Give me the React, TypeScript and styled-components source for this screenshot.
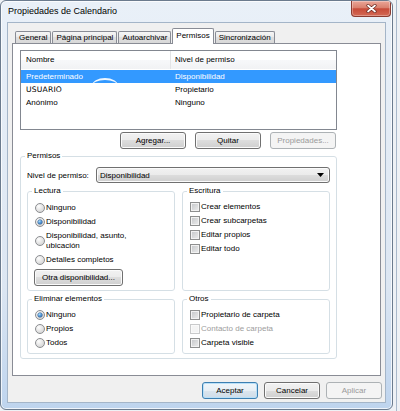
import React from "react";
import styled, { createGlobalStyle, css } from "styled-components";

const GlobalStyle = createGlobalStyle`
  html, body { margin: 0; padding: 0; }
  body {
    width: 400px;
    height: 411px;
    overflow: hidden;
    background: linear-gradient(to right, transparent 396px, #a9b8ca 396px, #a9b8ca 397px, transparent 397px), #eef1f5;
    font-family: "Liberation Sans", Arial, sans-serif;
    font-size: 8px;
    color: #000;
  }
`;

const Window = styled.div`
  box-sizing: border-box;
  width: 393px;
  height: 410px;
  border: 1px solid #6b7b8e;
  border-radius: 6px;
  background: linear-gradient(#e9f0f8, #dce6f2 70%, #bed4ee);
  box-shadow: inset 0 0 0 1px rgba(255, 255, 255, 0.75);
  display: flex;
  flex-direction: column;
  overflow: hidden;
`;

const TitleBar = styled.div`
  height: 21px;
  display: flex;
  justify-content: space-between;
  align-items: flex-start;
  padding-left: 7px;
`;

const Title = styled.span`
  font-size: 9px;
  line-height: 21px;
`;

const CloseButton = styled.div`
  box-sizing: border-box;
  width: 40px;
  height: 16px;
  margin-right: 1px;
  border: 1px solid #8b3b30;
  border-top: none;
  border-radius: 0 0 4px 4px;
  background: linear-gradient(#eaa698, #d9806e 45%, #c74b39 52%, #d36a55);
  box-shadow: inset 0 0 0 1px rgba(255, 255, 255, 0.3);
  display: flex;
  align-items: center;
  justify-content: center;
`;

const Client = styled.div`
  box-sizing: border-box;
  margin: 0 6px;
  height: 381px;
  border: 1px solid #a4b5c8;
  background: #f0f0f0;
  padding: 5px 3px 3px 4px;
  display: flex;
  flex-direction: column;
`;

const TabStrip = styled.div`
  display: flex;
  align-items: flex-end;
  gap: 1px;
  height: 15px;
  padding-left: 3px;
  position: relative;
  z-index: 1;
`;

const Tab = styled.div<{ $active?: boolean }>`
  box-sizing: border-box;
  padding: 0 3px;
  border: 1px solid #898c95;
  border-bottom: none;
  border-radius: 2px 2px 0 0;
  white-space: nowrap;
  ${(p) =>
    p.$active
      ? css`
          height: 16px;
          margin-bottom: -1px;
          line-height: 14px;
          background: #fff;
        `
      : css`
          height: 12px;
          line-height: 11px;
          background: linear-gradient(#f6f6f6, #e9e9e9 50%, #dfdfdf 50%, #d8d8d8);
        `}
`;

const Panel = styled.div`
  box-sizing: border-box;
  height: 333px;
  margin-right: 1px;
  border: 1px solid #898c95;
  background: #fff;
  padding: 6px 0 0 7px;
`;

const ListView = styled.div`
  box-sizing: border-box;
  width: 317px;
  height: 80px;
  border: 1px solid #828790;
  background: #fff;
`;

const ListHeader = styled.div`
  display: flex;
  height: 18px;
  background: linear-gradient(#fff, #fff 50%, #f7f8fa 50%, #f1f2f4);
`;

const HeaderCell = styled.div<{ $first?: boolean }>`
  box-sizing: border-box;
  line-height: 18px;
  ${(p) =>
    p.$first
      ? css`
          width: 150px;
          padding-left: 5px;
          border-right: 1px solid #e3e4e6;
        `
      : css`
          flex: 1;
          padding-left: 4px;
        `}
`;

const Rows = styled.div`
  padding-top: 1px;
`;

const Row = styled.div<{ $selected?: boolean }>`
  position: relative;
  display: flex;
  height: 13px;
  line-height: 13px;
  ${(p) =>
    p.$selected &&
    css`
      background: #3399ff;
      color: #fff;
    `}
`;

const Cell = styled.div<{ $first?: boolean; $mono?: boolean }>`
  box-sizing: border-box;
  ${(p) =>
    p.$first
      ? css`
          width: 150px;
          padding-left: 5px;
        `
      : css`
          flex: 1;
          padding-left: 4px;
        `}
  ${(p) =>
    p.$mono &&
    css`
      font-family: "DejaVu Sans", sans-serif;
      font-size: 7.6px;
      letter-spacing: 0.2px;
    `}
`;

const Smudge = styled.span`
  position: absolute;
  left: 71px;
  top: 8px;
  box-sizing: border-box;
  width: 26px;
  height: 8px;
  border-top: 2.5px solid rgba(255, 255, 255, 0.92);
  border-radius: 50% 50% 0 0 / 100% 100% 0 0;
`;

const ButtonRow = styled.div<{ $gap: number }>`
  display: flex;
  justify-content: flex-end;
  gap: ${(p) => p.$gap}px;
`;

const ListButtons = styled(ButtonRow)`
  box-sizing: border-box;
  width: 317px;
  padding-right: 1px;
  margin-top: 2px;
`;

const Button = styled.button<{ $w: number; $variant?: "default" | "disabled" }>`
  box-sizing: border-box;
  width: ${(p) => p.$w}px;
  height: 17px;
  padding: 0;
  font-family: "Liberation Sans", Arial, sans-serif;
  font-size: 8px;
  color: #000;
  border: 1px solid #707070;
  border-radius: 3px;
  background: linear-gradient(#f2f2f2, #ebebeb 50%, #dddddd 50%, #cfcfcf);
  box-shadow: inset 0 0 0 1px #fbfbfb;
  flex-shrink: 0;
  ${(p) =>
    p.$variant === "default" &&
    css`
      border-color: #3c7fb1;
      background: linear-gradient(#f0f6fa, #e8eff5 50%, #dbe5ee 50%, #cfdce8);
      box-shadow: inset 0 0 0 1px #b9e0f8;
    `}
  ${(p) =>
    p.$variant === "disabled" &&
    css`
      border-color: #adb2b5;
      background: #f4f4f4;
      color: #9a9a9a;
      box-shadow: none;
    `}
`;

const Group = styled.fieldset<{ $mt?: number }>`
  box-sizing: border-box;
  margin: ${(p) => p.$mt ?? 0}px 0 0 0;
  padding: 0;
  min-width: 0;
  border: 1px solid #d5dfe5;
  border-radius: 3px;
`;

const PermGroup = styled(Group)`
  width: 317px;
`;

const Legend = styled.legend`
  margin-left: 4px;
  padding: 0 2px;
  font-size: 8px;
  line-height: 10px;
`;

const GroupBody = styled.div<{ $pt: number; $pb: number }>`
  display: flex;
  flex-direction: column;
  gap: 4px;
  padding: ${(p) => p.$pt}px 6px ${(p) => p.$pb}px 7px;
`;

const PermBody = styled.div`
  padding: 6px 6px 4px 6px;
`;

const LevelRow = styled.div`
  display: flex;
  align-items: center;
`;

const LevelLabel = styled.span`
  width: 69px;
  flex-shrink: 0;
`;

const Combo = styled.div`
  box-sizing: border-box;
  flex: 1;
  height: 16px;
  padding: 0 5px 0 3px;
  border: 1px solid #707070;
  border-radius: 3px;
  background: linear-gradient(#f2f2f2, #ebebeb 50%, #dddddd 50%, #cfcfcf);
  box-shadow: inset 0 0 0 1px #fbfbfb;
  display: flex;
  align-items: center;
  justify-content: space-between;
`;

const SubGrid = styled.div`
  display: grid;
  grid-template-columns: 148px 148px;
  column-gap: 7px;
  row-gap: 3px;
  margin-top: 3px;
`;

const Option = styled.div<{ $disabled?: boolean }>`
  display: flex;
  align-items: center;
  line-height: 10px;
  color: ${(p) => (p.$disabled ? "#9d9d9d" : "#000")};
`;

const OptionText = styled.span<{ $max?: number }>`
  ${(p) => p.$max && css`max-width: ${p.$max}px;`}
`;

const Radio = styled.span`
  box-sizing: border-box;
  width: 10px;
  height: 10px;
  flex-shrink: 0;
  margin-right: 1px;
  border-radius: 50%;
  border: 1px solid #8b8d90;
  background: radial-gradient(circle at 35% 30%, #fdfdfd, #dadada 70%, #cdcdcd);
  display: flex;
  align-items: center;
  justify-content: center;
`;

const RadioDot = styled.span`
  width: 4px;
  height: 4px;
  border-radius: 50%;
  background: radial-gradient(circle at 40% 35%, #a6dbfb, #2f79c4 60%, #1b4a86);
  box-shadow: 0 0 0 0.5px #1d4f86;
`;

const Check = styled.span<{ $disabled?: boolean }>`
  box-sizing: border-box;
  width: 10px;
  height: 10px;
  flex-shrink: 0;
  margin-right: 1px;
  border: 1px solid ${(p) => (p.$disabled ? "#c9cacb" : "#8e8f8f")};
  background: ${(p) =>
    p.$disabled ? "#f4f4f4" : "linear-gradient(135deg, #c3c5c8, #eeeeee)"};
  box-shadow: inset 0 0 0 1px ${(p) => (p.$disabled ? "#fafafa" : "#f2f2f2")};
`;

const OtherButton = styled(Button)`
  align-self: flex-start;
  margin-left: -1px;
`;

const BottomButtons = styled(ButtonRow)`
  margin-top: 6px;
`;

const RadioOpt = ({ label, checked, max }: { label: string; checked?: boolean; max?: number }) => (
  <Option>
    <Radio>{checked && <RadioDot />}</Radio>
    <OptionText $max={max}>{label}</OptionText>
  </Option>
);

const CheckOpt = ({ label, disabled }: { label: string; disabled?: boolean }) => (
  <Option $disabled={disabled}>
    <Check $disabled={disabled} />
    <OptionText>{label}</OptionText>
  </Option>
);

export default function App() {
  return (
    <>
      <GlobalStyle />
      <Window>
        <TitleBar>
          <Title>Propiedades de Calendario</Title>
          <CloseButton>
            <svg width="11" height="9" viewBox="0 0 11 9">
              <path d="M2 1.5 L9 7.5 M9 1.5 L2 7.5" stroke="#6b2a22" strokeWidth="3.2" strokeLinecap="round" />
              <path d="M2 1.5 L9 7.5 M9 1.5 L2 7.5" stroke="#fff" strokeWidth="1.7" strokeLinecap="round" />
            </svg>
          </CloseButton>
        </TitleBar>
        <Client>
          <TabStrip>
            <Tab>General</Tab>
            <Tab>Página principal</Tab>
            <Tab>Autoarchivar</Tab>
            <Tab $active>Permisos</Tab>
            <Tab>Sincronización</Tab>
          </TabStrip>
          <Panel>
            <ListView>
              <ListHeader>
                <HeaderCell $first>Nombre</HeaderCell>
                <HeaderCell>Nivel de permiso</HeaderCell>
              </ListHeader>
              <Rows>
                <Row $selected>
                  <Cell $first>Predeterminado</Cell>
                  <Cell>Disponibilidad</Cell>
                  <Smudge />
                </Row>
                <Row>
                  <Cell $first $mono>USUARIO</Cell>
                  <Cell>Propietario</Cell>
                </Row>
                <Row>
                  <Cell $first>Anónimo</Cell>
                  <Cell>Ninguno</Cell>
                </Row>
              </Rows>
            </ListView>
            <ListButtons $gap={9}>
              <Button $w={66}>Agregar...</Button>
              <Button $w={66}>Quitar</Button>
              <Button $w={66} $variant="disabled">Propiedades...</Button>
            </ListButtons>
            <PermGroup $mt={2}>
              <Legend>Permisos</Legend>
              <PermBody>
                <LevelRow>
                  <LevelLabel>Nivel de permiso:</LevelLabel>
                  <Combo>
                    <span>Disponibilidad</span>
                    <svg width="7" height="4" viewBox="0 0 7 4">
                      <path d="M0 0 H7 L3.5 4 Z" fill="#000" />
                    </svg>
                  </Combo>
                </LevelRow>
                <SubGrid>
                  <Group>
                    <Legend>Lectura</Legend>
                    <GroupBody $pt={7} $pb={4}>
                      <RadioOpt label="Ninguno" />
                      <RadioOpt label="Disponibilidad" checked />
                      <RadioOpt label="Disponibilidad, asunto, ubicación" max={100} />
                      <RadioOpt label="Detalles completos" />
                      <OtherButton $w={89}>Otra disponibilidad...</OtherButton>
                    </GroupBody>
                  </Group>
                  <Group>
                    <Legend>Escritura</Legend>
                    <GroupBody $pt={6} $pb={4}>
                      <CheckOpt label="Crear elementos" />
                      <CheckOpt label="Crear subcarpetas" />
                      <CheckOpt label="Editar propios" />
                      <CheckOpt label="Editar todo" />
                    </GroupBody>
                  </Group>
                  <Group>
                    <Legend>Eliminar elementos</Legend>
                    <GroupBody $pt={6} $pb={5}>
                      <RadioOpt label="Ninguno" checked />
                      <RadioOpt label="Propios" />
                      <RadioOpt label="Todos" />
                    </GroupBody>
                  </Group>
                  <Group>
                    <Legend>Otros</Legend>
                    <GroupBody $pt={6} $pb={5}>
                      <CheckOpt label="Propietario de carpeta" />
                      <CheckOpt label="Contacto de carpeta" disabled />
                      <CheckOpt label="Carpeta visible" />
                    </GroupBody>
                  </Group>
                </SubGrid>
              </PermBody>
            </PermGroup>
          </Panel>
          <BottomButtons $gap={6}>
            <Button $w={56} $variant="default">Aceptar</Button>
            <Button $w={56}>Cancelar</Button>
            <Button $w={56} $variant="disabled">Aplicar</Button>
          </BottomButtons>
        </Client>
      </Window>
    </>
  );
}
